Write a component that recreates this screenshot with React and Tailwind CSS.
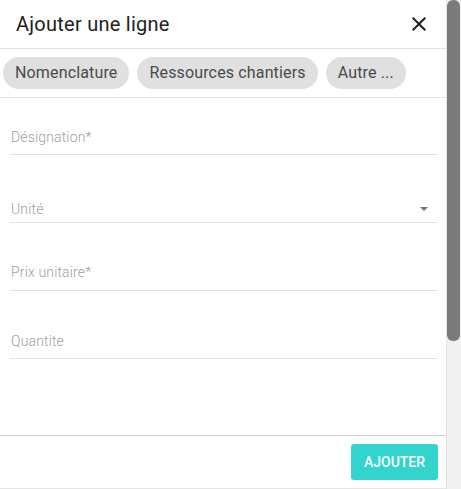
import React from "react";

function Field({ label, h, pb, select }) {
  return (
    <div className={`flex items-end border-b border-[#e0e0e0] ${h}`}>
      <div className={`flex w-full items-center justify-between pl-[1px] ${pb}`}>
        <span className="text-[14px] font-light leading-[20px] tracking-[0.15px] text-[#9e9e9e]">{label}</span>
        {select && (
          <svg width="8" height="4" viewBox="0 0 8 4" className="mr-[9px]">
            <path d="M0 0h8L4 4z" fill="#757575" />
          </svg>
        )}
      </div>
    </div>
  );
}

export default function App() {
  return (
    <div
      className="flex h-[489px] w-[461px] bg-white"
      style={{ fontFamily: "Roboto, 'Liberation Sans', sans-serif" }}
    >
      <div className="flex w-[446px] flex-col border-b border-[#e6e6e6] h-[489px]">
        <div className="flex h-[49px] items-center justify-between border-b border-[#e0e0e0] pl-4 pr-[15px]">
          <span className="text-[20px] leading-[24px] tracking-[0.25px] text-[#212121]">Ajouter une ligne</span>
          <svg width="24" height="24" viewBox="0 0 24 24">
            <path
              d="M19 6.41 17.59 5 12 10.59 6.41 5 5 6.41 10.59 12 5 17.59 6.41 19 12 13.41 17.59 19 19 17.59 13.41 12z"
              fill="#212121"
            />
          </svg>
        </div>
        <div className="flex h-[49px] items-center gap-2 border-b border-[#e0e0e0] pl-[3px]">
          {["Nomenclature", "Ressources chantiers", "Autre ..."].map((c) => (
            <div
              key={c}
              className="flex h-[32px] items-center rounded-full bg-[#e0e0e0] px-3 text-[16px] tracking-[0.15px] text-[#4a4a4a]"
            >
              {c}
            </div>
          ))}
        </div>
        <div className="flex flex-1 flex-col pl-[10px] pr-[9px]">
          <Field label="Désignation*" h="h-[57px]" pb="pb-[7px]" />
          <Field label="Unité" h="h-[68px]" pb="pb-[3px]" select />
          <Field label="Prix unitaire*" h="h-[68px]" pb="pb-[8px]" />
          <Field label="Quantite" h="h-[68px]" pb="pb-[7px]" />
        </div>
        <div className="flex h-[53px] justify-end border-t border-[#cfcfcf] pr-2 pt-2">
          <button className="h-[36px] w-[87px] rounded-[3px] bg-[#33d4ce] text-[14px] font-medium text-white">
            AJOUTER
          </button>
        </div>
      </div>
      <div className="flex h-[489px] w-[15px] flex-col border-l border-[#e3e3e3] bg-[#f1f1f1] pr-[1px]">
        <div className="h-[341px] w-[13px] rounded-[6px] bg-[#7b7b7b]" />
      </div>
    </div>
  );
}
